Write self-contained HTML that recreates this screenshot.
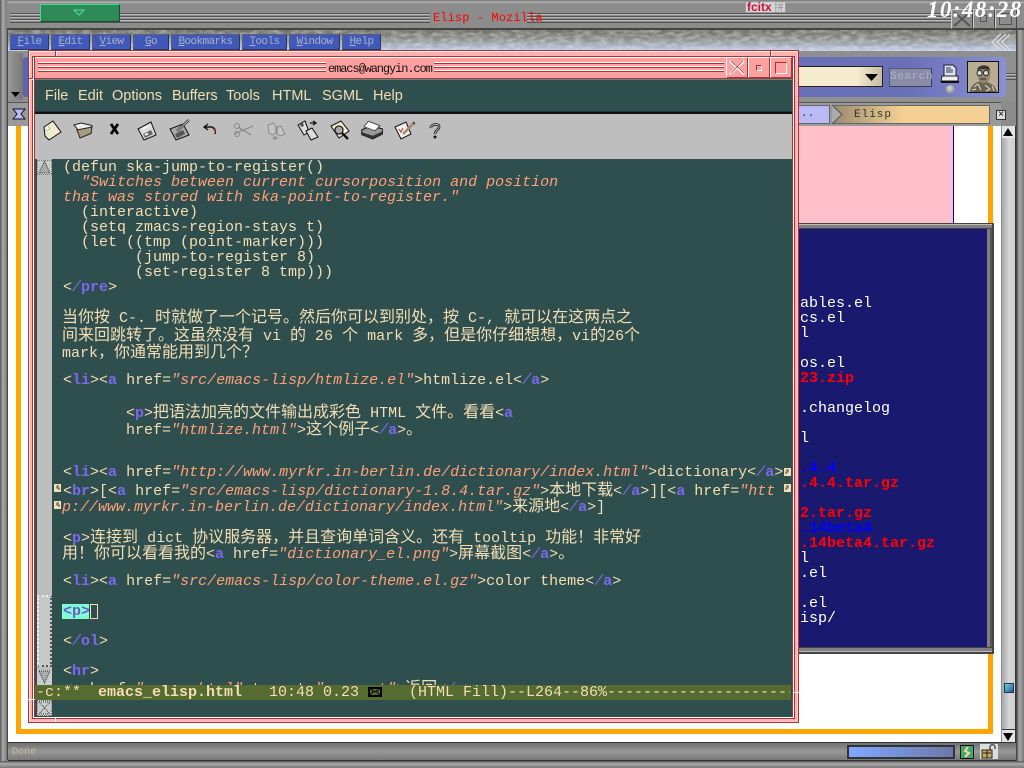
<!DOCTYPE html>
<html><head><meta charset="utf-8"><title>Elisp - Mozilla</title>
<style>
html,body{margin:0;padding:0;width:1024px;height:768px;overflow:hidden;background:#8a8a8a}
div,span,svg{box-sizing:border-box}
.a{position:absolute}
.l{position:absolute;white-space:pre;font:15px/15px "Liberation Mono","Noto Sans CJK SC",monospace;color:#f5deb3}
.c{font-family:"WenQuanYi Zen Hei","Noto Sans CJK SC",sans-serif;font-size:16px;line-height:15px}
i{color:#ffa07a;font-style:italic}
b{color:#7b68ee;font-weight:bold}
.s{color:#7b68ee;font-style:italic}
.g{background:repeating-linear-gradient(#555 0 1px,#bbb 1px 2px,#888 2px 3px)}
.m{position:absolute;top:34px;height:16px;background:#4058b8;border:1px solid;border-color:#5a6078 #2c3560 #2c3560 #5a6078;color:#aab0c8;font:11px/15px "Liberation Mono",monospace;letter-spacing:-.6px;text-align:center;white-space:pre}
.m u{text-decoration:underline}
.em{position:absolute;top:88px;font:14.5px/16px "Liberation Sans",sans-serif;color:#f5deb3;white-space:pre}
.w{position:absolute;white-space:pre;font:15px/15px "Liberation Mono",monospace;color:#fff}
.r{color:#f00;font-weight:bold}
.bl{color:#00f;font-weight:bold}
.wb{position:absolute;top:57px;width:22px;height:21px;background:#ffa0a0;border:1px solid;border-color:#fff #a33 #a33 #fff}
.tl{position:absolute;height:2px;background:linear-gradient(#fff 50%,#a33 50%)}
</style></head><body>

<!-- outer window frame -->
<div class="a" style="left:0;top:0;width:1024px;height:768px;background:#8c8c8c"></div>
<div class="a" style="left:0;top:0;width:1024px;height:3px;background:linear-gradient(#777,#bbb)"></div>
<div class="a" style="left:0;top:28px;width:1024px;height:2px;background:#444"></div>
<div class="a" style="left:7px;top:30px;width:1px;height:730px;background:#444"></div>
<div class="a" style="left:0;top:0;width:7px;height:768px;background:linear-gradient(90deg,#555,#aaa 40%,#777)"></div>
<div class="a" style="left:1016px;top:30px;width:8px;height:738px;background:linear-gradient(90deg,#333,#aaa 40%,#777)"></div>
<div class="a" style="left:0;top:761px;width:1024px;height:7px;background:linear-gradient(#555,#aaa 40%,#777)"></div>
<div class="a g" style="left:10px;top:13px;width:420px;height:10px"></div>
<div class="a g" style="left:527px;top:13px;width:425px;height:10px"></div>
<div class="a" style="left:40px;top:4px;width:80px;height:18px;background:#2e8b57;border:1px solid;border-color:#3fe08a #184a30 #184a30 #3fe08a"></div>
<svg class="a" style="left:73px;top:9px" width="12" height="7"><path d="M1 1H11L6 6Z" fill="#2e8b57" stroke="#52e09a"/></svg>
<div class="l" style="left:433px;top:11px;color:#f00;letter-spacing:.1px;font-size:12px">Elisp - Mozilla</div>
<div class="a" style="left:745px;top:1px;width:41px;height:12px;background:#d4d4d4;border:1px solid #999;font:bold 12px/10px 'Liberation Sans',sans-serif;color:#c8103c;padding-left:1px;white-space:pre">fcitx<span style="color:#999;font:10px/10px 'Noto Sans CJK SC',sans-serif"> 拼</span></div>
<div class="a" style="left:951px;top:9px;width:22px;height:20px;background:#8c8c8c;border:1px solid;border-color:#ccc #444 #444 #ccc"></div>
<svg class="a" style="left:953px;top:11px" width="18" height="16"><path d="M1 1L17 15M17 1L1 15" stroke="#555" stroke-width="2"/></svg>
<div class="a" style="left:973px;top:9px;width:22px;height:20px;background:#8c8c8c;border:1px solid;border-color:#ccc #444 #444 #ccc"></div>
<div class="a" style="left:980px;top:15px;width:7px;height:7px;border:1px solid #555"></div>
<div class="a" style="left:995px;top:9px;width:22px;height:20px;background:#8c8c8c;border:1px solid;border-color:#ccc #444 #444 #ccc"></div>
<div class="a" style="left:999px;top:13px;width:13px;height:12px;border:1px solid #555"></div>
<div class="a" style="left:927px;top:-3px;font:italic bold 23px/26px 'Liberation Serif',serif;color:#fff;letter-spacing:1.400px;white-space:pre">10:48:28</div>

<!-- textured menu band -->
<div class="a" style="left:8px;top:30px;width:1008px;height:21px;background:linear-gradient(#6e6e6a,#8b8b88 40%,#a8aec0 75%,#c4cce8);overflow:hidden">
<svg width="1008" height="21" style="display:block"><filter id="n"><feTurbulence type="fractalNoise" baseFrequency="0.12 0.3" numOctaves="3" seed="4"/><feColorMatrix values="0 0 0 0 1 0 0 0 0 1 0 0 0 0 1 1.6 0 0 0 -.55"/></filter><rect width="1008" height="21" filter="url(#n)" opacity=".5"/></svg></div>
<svg class="a" style="left:990px;top:33px" width="20" height="18"><path d="M11 1L2 9L11 17M16 1L7 9L16 17M20 1L12 9L20 17" fill="none" stroke="#ddd" stroke-width="1.4"/></svg>
<div class="m" style="left:10px;width:39px"><u>F</u>ile</div>
<div class="m" style="left:51px;width:39px"><u>E</u>dit</div>
<div class="m" style="left:92px;width:39px"><u>V</u>iew</div>
<div class="m" style="left:133px;width:36px"><u>G</u>o</div>
<div class="m" style="left:171px;width:69px"><u>B</u>ookmarks</div>
<div class="m" style="left:242px;width:45px"><u>T</u>ools</div>
<div class="m" style="left:289px;width:51px"><u>W</u>indow</div>
<div class="m" style="left:342px;width:39px"><u>H</u>elp</div>

<!-- navigation toolbar -->
<div class="a" style="left:8px;top:51px;width:1008px;height:51px;background:#8f8f8f"></div>
<div class="a" style="left:8px;top:53px;width:15px;height:47px;background:linear-gradient(90deg,#999,#777)"></div>
<svg class="a" style="left:11px;top:92px" width="9" height="6"><path d="M0 0H9L4.500 5Z"/></svg>
<div class="a" style="left:23px;top:57px;width:983px;height:40px;background:linear-gradient(90deg,#5c64b0,#6a70b8 90%,#8a90d4);border-radius:3px"></div>
<div class="a" style="left:798px;top:66px;width:85px;height:21px;background:linear-gradient(90deg,#f5ebcf,#f5ebcf 70%,#c8bca0);border:1px solid #222;border-left:0"></div>
<svg class="a" style="left:865px;top:74px" width="13" height="7"><path d="M0 0H13L6.500 7Z"/></svg>
<div class="a" style="left:889px;top:68px;width:43px;height:19px;background:#888ca8;border:1px solid;border-color:#555970 #3a3d55 #3a3d55 #555970;font:11px/17px 'Liberation Mono',monospace;color:#aeb2c2;text-align:center;letter-spacing:.6px">Search</div>
<svg class="a" style="left:940px;top:64px" width="20" height="20"><path d="M4 1H13L16 4V12H4Z" fill="#dde3f0" stroke="#222"/><path d="M6 4H11M6 6H13M6 8H13" stroke="#335"/><path d="M2 12H18V17H1Z" fill="#eee" stroke="#222"/><path d="M1 18H19" stroke="#111" stroke-width="2"/></svg>
<div class="a" style="left:946px;top:85px;width:9px;height:9px;border-radius:50%;background:radial-gradient(circle at 40% 35%,#ddd,#666)"></div>
<div class="a" style="left:967px;top:61px;width:32px;height:32px;background:#b5ab90;border:1px solid #111;overflow:hidden">
<svg width="30" height="30"><rect width="30" height="30" fill="#b8ae94"/><path d="M2 30C3 21 10 20 14 19C20 20 27 22 29 30Z" fill="#6a6450"/><path d="M9 10C9 4 14 3 18 4C23 5 23 11 22 15C21 20 17 22 14 21C11 20 9 15 9 10Z" fill="#8d8570"/><path d="M9 8C10 3 17 2 21 5L22 9C18 6 13 7 9 8Z" fill="#3a352a"/><circle cx="11.500" cy="11" r="2.500" fill="#ddd" stroke="#222"/><circle cx="18" cy="11" r="2.500" fill="#ddd" stroke="#222"/><path d="M6 25L10 22L13 28M17 23L22 27L18 29M24 24L26 29M4 28L8 27" stroke="#e4e0d0" fill="none"/><path d="M12 17H18" stroke="#332"/></svg></div>
<div class="a g" style="left:1006px;top:73px;width:10px;height:7px"></div>

<!-- tab row -->
<div class="a" style="left:8px;top:102px;width:993px;height:24px;background:#9a9a9a;border-top:1px solid #555"></div>
<svg class="a" style="left:12px;top:108px" width="14" height="12"><path d="M1 1H13L9 6L13 11H1L5 6Z" fill="#b9b9ff" stroke="#111" stroke-width="1"/></svg>
<div class="a" style="left:798px;top:105px;width:32px;height:19px;background:#b9b9f5;border:1px solid #666;font:11px/17px 'Liberation Mono',monospace;color:#333;padding-left:2px">..</div>
<div class="a" style="left:832px;top:105px;width:158px;height:19px;background:linear-gradient(90deg,#9a8a70,#f5d094 45%,#f5d094);border:1px solid #666;font:11px/18px 'Liberation Mono',monospace;color:#332;padding-left:21px;letter-spacing:1px">Elisp</div>
<svg class="a" style="left:832px;top:105px" width="11" height="19"><path d="M0 0L10 9.500L0 19" fill="#aaa" stroke="#555"/></svg>
<div class="a" style="left:996px;top:110px;width:10px;height:10px;background:#ddd;border:1px solid #333;font:10px/8px 'Liberation Sans',sans-serif;text-align:center">×</div>

<!-- browser content -->
<div class="a" style="left:8px;top:126px;width:993px;height:616px;background:#fff"></div>
<div class="a" style="left:16px;top:126px;width:5px;height:608px;background:#ffa500"></div>
<div class="a" style="left:988px;top:126px;width:5px;height:608px;background:#ffa500"></div>
<div class="a" style="left:16px;top:729px;width:977px;height:5px;background:#ffa500"></div>
<div class="a" style="left:798px;top:126px;width:155px;height:99px;background:#ffc0cb"></div>
<div class="a" style="left:953px;top:126px;width:1px;height:99px;background:#00c"></div>

<!-- dark blue panel -->
<div class="a" style="left:790px;top:223px;width:204px;height:431px;background:#191970;border:1px solid #444;border-width:1px 2px 2px 1px"></div>
<div class="a" style="left:987px;top:225px;width:5px;height:427px;background:#808080;border-right:2px solid #555"></div>
<div class="a" style="left:790px;top:224px;width:202px;height:5px;background:#808080;border-top:1px solid #bbb;border-bottom:1px solid #444"></div>
<div class="a" style="left:790px;top:647px;width:202px;height:5px;background:#808080;border-top:1px solid #444;border-bottom:1px solid #bbb"></div>
<div class="w" style="left:800px;top:296px">ables.el</div>
<div class="w" style="left:800px;top:311px">cs.el</div>
<div class="w" style="left:800px;top:326px">l</div>
<div class="w" style="left:800px;top:356px">os.el</div>
<div class="w r" style="left:800px;top:371px">23.zip</div>
<div class="w" style="left:800px;top:401px">.changelog</div>
<div class="w" style="left:800px;top:431px">l</div>
<div class="w bl" style="left:800px;top:461px">.4.4</div>
<div class="w r" style="left:800px;top:476px">.4.4.tar.gz</div>
<div class="w r" style="left:800px;top:506px">2.tar.gz</div>
<div class="w bl" style="left:800px;top:521px">.14beta4</div>
<div class="w r" style="left:800px;top:536px">.14beta4.tar.gz</div>
<div class="w" style="left:800px;top:551px">l</div>
<div class="w" style="left:800px;top:566px">.el</div>
<div class="w" style="left:800px;top:596px">.el</div>
<div class="w" style="left:800px;top:611px">isp/</div>

<!-- browser scrollbar -->
<div class="a" style="left:1002px;top:126px;width:14px;height:616px;background:linear-gradient(90deg,#a8a8a8,#d6d6d6 55%,#cfcfcf);border-right:1px solid #333"></div>
<div class="a" style="left:1002px;top:126px;width:13px;height:12px;background:#e4e4e4"></div>
<svg class="a" style="left:1003px;top:128px" width="10" height="8"><path d="M5 0L10 8H0Z"/></svg>
<div class="a" style="left:1002px;top:729px;width:13px;height:13px;background:#e4e4e4;border-top:1px solid #333"></div>
<svg class="a" style="left:1003px;top:733px" width="10" height="8"><path d="M0 0H10L5 8Z"/></svg>
<div class="a" style="left:1004px;top:683px;width:10px;height:10px;background:linear-gradient(135deg,#6fd0e8,#1c5d96);border:1px solid #234"></div>

<!-- status bar -->
<div class="a" style="left:8px;top:742px;width:1008px;height:19px;background:linear-gradient(#707070,#989898 50%,#787878);border-top:1px solid #333;border-bottom:1px solid #333"></div>
<div class="a" style="left:12px;top:748px;font:10px/10px 'Liberation Mono',monospace;color:#c4bca4">Done</div>
<div class="a" style="left:847px;top:745px;width:108px;height:14px;background:linear-gradient(90deg,#80a8ff,#6c78a8);border:2px solid #333"></div>
<svg class="a" style="left:960px;top:745px" width="14" height="14"><rect x=".5" y=".5" width="13" height="13" fill="#3fa870" stroke="#111"/><path d="M8 2L5 6L9 8L5 12" fill="none" stroke="#f5d8a0" stroke-width="2"/></svg>
<svg class="a" style="left:980px;top:744px" width="18" height="15"><rect width="18" height="15" fill="#ddd"/><path d="M10 6V3C10 0 15 0 15 3V5" fill="none" stroke="#555" stroke-width="1.500"/><rect x="2" y="6" width="10" height="8" fill="#c8aa58" stroke="#222"/><path d="M3 9H11M7 6V14" stroke="#222"/></svg>

<!-- EMACS WINDOW -->
<div class="a" style="left:28px;top:50px;width:771px;height:673px;background:#a33"></div>
<div class="a" style="left:29px;top:51px;width:769px;height:671px;background:#ffb0b0;border:1px solid #fff0f0;border-right-color:#ffc8c8;border-bottom-color:#ffc8c8"></div>
<div class="a" style="left:32px;top:56px;width:763px;height:663px;background:#a33"></div>
<div class="a" style="left:33px;top:57px;width:761px;height:661px;background:#fff"></div>
<div class="a" style="left:34px;top:57px;width:759px;height:660px;background:#a33"></div>
<div class="a" style="left:35px;top:57px;width:691px;height:21px;background:#ffa0a0;border-top:1px solid #fff"></div>
<div class="tl" style="left:38px;top:62px;width:288px"></div>
<div class="tl" style="left:38px;top:66px;width:288px"></div>
<div class="tl" style="left:38px;top:70px;width:288px"></div>
<div class="tl" style="left:434px;top:62px;width:290px"></div>
<div class="tl" style="left:434px;top:66px;width:290px"></div>
<div class="tl" style="left:434px;top:70px;width:290px"></div>
<div class="l" style="left:328px;top:62px;line-height:15px;color:#111;font-size:12px;letter-spacing:-1.100px">emacs@wangyin.com</div>
<div class="wb" style="left:726px"></div>
<svg class="a" style="left:729px;top:60px" width="16" height="15"><path d="M1 1L15 14M15 1L1 14" stroke="#fff" stroke-width="2.500"/><path d="M2 1L15 13M14 1L2 13" stroke="#a33" stroke-width=".8"/></svg>
<div class="wb" style="left:748px"></div>
<div class="a" style="left:756px;top:65px;width:6px;height:6px;background:#ffa0a0;border:1px solid;border-color:#a33 #fff #fff #a33"></div>
<div class="wb" style="left:770px"></div>
<div class="a" style="left:775px;top:62px;width:12px;height:12px;background:#ffa0a0;border:1px solid;border-color:#a33 #fff #fff #a33"></div>
<!-- top notches -->
<div class="a" style="left:55px;top:51px;width:1px;height:5px;background:#a33"></div>
<div class="a" style="left:56px;top:51px;width:1px;height:5px;background:#fff"></div>
<div class="a" style="left:770px;top:51px;width:1px;height:5px;background:#a33"></div>
<div class="a" style="left:771px;top:51px;width:1px;height:5px;background:#fff"></div>
<div class="a" style="left:29px;top:78px;width:4px;height:1px;background:#a33"></div>
<div class="a" style="left:29px;top:79px;width:4px;height:1px;background:#fff"></div>

<!-- emacs frame -->
<div class="a" style="left:35px;top:79px;width:757px;height:638px;background:#2f4f4f;overflow:hidden;border-top:1px solid #5a8a80"></div>
<div class="em" style="left:45px">File</div>
<div class="em" style="left:78px">Edit</div>
<div class="em" style="left:112px">Options</div>
<div class="em" style="left:172px">Buffers</div>
<div class="em" style="left:226px">Tools</div>
<div class="em" style="left:272px">HTML</div>
<div class="em" style="left:322px">SGML</div>
<div class="em" style="left:373px">Help</div>
<div class="a" style="left:35px;top:111px;width:757px;height:3px;background:#111;border-top:1px solid #234"></div>
<div class="a" style="left:35px;top:114px;width:757px;height:45px;background:#bebebe"></div>

<!-- emacs toolbar icons -->
<svg class="a" style="left:43px;top:120px" width="20" height="21"><path d="M1 7L10 1L18 12L6 20L2 16Z" fill="#eeeccc" stroke="#111"/><path d="M4 5L7 9L2 11" fill="#fff" stroke="#aaa" stroke-width=".7"/></svg>
<svg class="a" style="left:73px;top:122px" width="21" height="18"><path d="M1 3L8 1L19 3.500L18 7L6 9Z" fill="#eee" stroke="#222"/><path d="M4 8L19 5L18 11.500L7 16Z" fill="#a89c80" stroke="#222"/></svg>
<svg class="a" style="left:108px;top:122px" width="12" height="14"><path d="M3 2L10 12M10 2L3 12" stroke="#000" stroke-width="2.800"/></svg>
<svg class="a" style="left:136px;top:120px" width="22" height="21"><path d="M2 9L15 2L20 15L8 20Z" fill="#ddd" stroke="#111"/><path d="M7 14L15 10L17 14L9 18Z" fill="#666"/><path d="M9 15L12 13.500" stroke="#fff" stroke-width="2"/><path d="M6 8L12 5L13 7L7 10Z" fill="#f4f4f4"/></svg>
<svg class="a" style="left:168px;top:119px" width="22" height="22"><path d="M2 10L15 5L21 16L8 21Z" fill="#aaa" stroke="#111"/><path d="M7 15L15 11L17 15L9 19Z" fill="#555"/><path d="M9 12L21 1" stroke="#333" stroke-width="2.500"/><path d="M9 12L21 1" stroke="#ddd" stroke-width=".8"/></svg>
<svg class="a" style="left:203px;top:123px" width="15" height="13"><path d="M5 1L1 4L5 7" fill="none" stroke="#111" stroke-width="1.300"/><path d="M2 4H8C11 4 13 7 12 11" fill="none" stroke="#111" stroke-width="1.500"/><path d="M9 5C11 6 12 8 12 10" fill="none" stroke="#c44" stroke-width="1"/></svg>
<svg class="a" style="left:233px;top:122px" width="21" height="16"><path d="M1 12L20 4M5 5L18 13" stroke="#888" stroke-width="1.200"/><circle cx="4" cy="12" r="2.500" fill="none" stroke="#888"/><circle cx="4" cy="4" r="2.500" fill="none" stroke="#888"/></svg>
<svg class="a" style="left:266px;top:122px" width="20" height="19"><path d="M2 3L7 1L10 5L10 11L6 13L3 11ZM11 5L15 4L19 12L14 14L11 12Z" fill="#c4c4c4" stroke="#888"/><path d="M6 16H10M8 14L11 16L8 18" stroke="#888" fill="none"/></svg>
<svg class="a" style="left:297px;top:120px" width="22" height="21"><path d="M1 5L8 1L12 12L7 15Z" fill="#ddd" stroke="#111"/><path d="M9 11L15 8L21 17L14 20Z" fill="#ddd" stroke="#111"/><path d="M3 4L6 3L7 6L4 7Z" fill="#555"/><path d="M13 3H18M16 1L19 3L16 5" stroke="#111" fill="none" stroke-width="1.300"/></svg>
<svg class="a" style="left:330px;top:120px" width="21" height="21"><path d="M1 6L11 1L19 11L9 18Z" fill="#eeeccc" stroke="#111"/><circle cx="9" cy="10" r="4" fill="#aaa" stroke="#222" stroke-width="1.300"/><path d="M12 13L18 19" stroke="#111" stroke-width="2.300"/></svg>
<svg class="a" style="left:361px;top:119px" width="22" height="21"><path d="M.7 11L10 6.700L21.700 10V15L11.700 20L.7 15.700Z" fill="#999" stroke="#111"/><path d="M.7 13.300L11.700 16.700L21.700 12.300V15L11.700 20L.7 15.700Z" fill="#333"/><path d="M7.300 2.300L19 6.700L14 11.700L3 7.700Z" fill="#fff" stroke="#333" stroke-width=".8"/></svg>
<svg class="a" style="left:394px;top:120px" width="22" height="20"><path d="M1 7L12 2L17 14L7 19Z" fill="#eee" stroke="#111"/><path d="M5 9L7 12L9 8" stroke="#a54" fill="none" stroke-width="1.200"/><path d="M9 14L20 3" stroke="#a86" stroke-width="2.500"/><path d="M19 2L21 4" stroke="#333" stroke-width="1.500"/></svg>
<svg class="a" style="left:428px;top:122px" width="14" height="17"><path d="M3 6C2 2 12 1 11 5C11 8 7 8 7 12" fill="none" stroke="#111" stroke-width="2.500"/><path d="M3 6C2 2 12 1 11 5C11 8 7 8 7 12" fill="none" stroke="#ddd" stroke-width=".8"/><circle cx="7" cy="15" r="1.500" fill="#111"/></svg>

<!-- emacs scrollbar -->
<div class="a" style="left:37px;top:159px;width:15px;height:526px;background:#bebebe"></div>
<div class="a" style="left:37px;top:595px;width:15px;height:72px;background:#c8c8c8;border:2px dotted #555;border-top-color:#eee;border-left-color:#eee"></div>
<svg class="a" style="left:37px;top:160px" width="15" height="15"><rect width="15" height="15" fill="#ccc"/><rect width="15" height="15" fill="none" stroke="#222" stroke-dasharray="1 1"/><path d="M7.500 1L13 13H2Z" fill="#aaa" stroke="#333" stroke-dasharray="1 1"/></svg>
<svg class="a" style="left:37px;top:670px" width="15" height="15"><rect width="15" height="15" fill="#ccc"/><path d="M2 1H13L7.500 13Z" fill="#aaa" stroke="#333" stroke-dasharray="1 1"/></svg>
<svg class="a" style="left:37px;top:700px" width="15" height="16"><rect width="15" height="16" fill="#ccc"/><rect width="15" height="16" fill="none" stroke="#222" stroke-dasharray="1 1"/><path d="M2 2L13 14M13 2L2 14M2 2H13M2 14H13" stroke="#333" stroke-dasharray="1 1"/></svg>

<!-- buffer text -->
<div class="l" style="left:63px;top:160px">(defun ska-jump-to-register()</div>
<div class="l" style="left:63px;top:175px">  <i>"Switches between current cursorposition and position</i></div>
<div class="l" style="left:63px;top:190px"><i>that was stored with ska-point-to-register."</i></div>
<div class="l" style="left:63px;top:205px">  (interactive)</div>
<div class="l" style="left:63px;top:220px">  (setq zmacs-region-stays t)</div>
<div class="l" style="left:63px;top:235px">  (let ((tmp (point-marker)))</div>
<div class="l" style="left:63px;top:250px">        (jump-to-register 8)</div>
<div class="l" style="left:63px;top:265px">        (set-register 8 tmp)))</div>
<div class="l" style="left:63px;top:280px">&lt;<span class="s">/</span><b>pre</b>&gt;</div>

<div class="l" style="left:62px;top:308px"><span class="c">当你按</span> C-. <span class="c">时就做了一个记号。然后你可以到别处，按</span> C-, <span class="c">就可以在这两点之</span></div>
<div class="l" style="left:62px;top:326px"><span class="c">间来回跳转了。这虽然没有</span> vi <span class="c">的</span> 26 <span class="c">个</span> mark <span class="c">多，但是你仔细想想，</span>vi<span class="c">的</span>26<span class="c">个</span></div>
<div class="l" style="left:62px;top:343px">mark<span class="c">，你通常能用到几个？</span></div>

<div class="l" style="left:63px;top:373px">&lt;<b>li</b>&gt;&lt;<b>a</b> href=<i>"src/emacs-lisp/htmlize.el"</i>&gt;htmlize.el&lt;<span class="s">/</span><b>a</b>&gt;</div>
<div class="l" style="left:126px;top:403px">&lt;<b>p</b>&gt;<span class="c">把语法加亮的文件输出成彩色</span> HTML <span class="c">文件。看看</span>&lt;<b>a</b></div>
<div class="l" style="left:126px;top:420px">href=<i>"htmlize.html"</i>&gt;<span class="c">这个例子</span>&lt;<span class="s">/</span><b>a</b>&gt;<span class="c">。</span></div>

<div class="l" style="left:63px;top:465px">&lt;<b>li</b>&gt;&lt;<b>a</b> href=<i>"http://www.myrkr.in-berlin.de/dictionary/index.html"</i>&gt;dictionary&lt;<span class="s">/</span><b>a</b>&gt;</div>
<div class="l" style="left:63px;top:481px">&lt;<b>br</b>&gt;[&lt;<b>a</b> href=<i>"src/emacs-lisp/dictionary-1.8.4.tar.gz"</i>&gt;<span class="c">本地下载</span>&lt;<span class="s">/</span><b>a</b>&gt;][&lt;<b>a</b> href=<i>"htt</i></div>
<div class="l" style="left:62px;top:497px"><i>p://www.myrkr.in-berlin.de/dictionary/index.html"</i>&gt;<span class="c">来源地</span>&lt;<span class="s">/</span><b>a</b>&gt;]</div>

<div class="l" style="left:63px;top:528px">&lt;<b>p</b>&gt;<span class="c">连接到</span> dict <span class="c">协议服务器，并且查询单词含义。还有</span> tooltip <span class="c">功能！非常好</span></div>
<div class="l" style="left:62px;top:544px"><span class="c">用！你可以看看我的</span>&lt;<b>a</b> href=<i>"dictionary_el.png"</i>&gt;<span class="c">屏幕截图</span>&lt;<span class="s">/</span><b>a</b>&gt;<span class="c">。</span></div>

<div class="l" style="left:63px;top:574px">&lt;<b>li</b>&gt;&lt;<b>a</b> href=<i>"src/emacs-lisp/color-theme.el.gz"</i>&gt;color theme&lt;<span class="s">/</span><b>a</b>&gt;</div>

<div class="a" style="left:62px;top:604px;width:27px;height:15px;background:#7fffd4"></div>
<div class="l" style="left:63px;top:604px"><b style="color:#6a5acd">&lt;p&gt;</b></div>
<div class="a" style="left:90px;top:604px;width:8px;height:15px;border:1px solid #f5deb3"></div>

<div class="l" style="left:63px;top:634px">&lt;<span class="s">/</span><b>ol</b>&gt;</div>
<div class="l" style="left:63px;top:664px">&lt;<b>hr</b>&gt;</div>
<div class="a" style="left:36px;top:676px;width:750px;height:9px;overflow:hidden"><div class="l" style="left:27px;top:3px">&lt;<b>a</b> href=<i>"emacs.html"</i> target=<i>"_parent"</i>&gt;<span class="c">返回</span>&lt;<span class="s">/</span><b>a</b>&gt;</div></div>

<!-- continuation glyphs -->
<svg class="a" style="left:784px;top:468px" width="7" height="8"><path d="M0 0H7V8H0Z" fill="#f5deb3"/><path d="M2 2H4V4H2V6" stroke="#2f4f4f" fill="none"/></svg>
<svg class="a" style="left:784px;top:484px" width="7" height="8"><path d="M0 0H7V8H0Z" fill="#f5deb3"/><path d="M2 2H4V4H2V6" stroke="#2f4f4f" fill="none"/></svg>
<svg class="a" style="left:54px;top:484px" width="7" height="8"><path d="M0 0H7V8H0Z" fill="#f5deb3"/><path d="M5 2H3V4H5V6" stroke="#2f4f4f" fill="none"/></svg>
<svg class="a" style="left:54px;top:501px" width="7" height="8"><path d="M0 0H7V8H0Z" fill="#f5deb3"/><path d="M5 2H3V4H5V6" stroke="#2f4f4f" fill="none"/></svg>

<!-- mode line -->
<div class="a" style="left:35px;top:685px;width:756px;height:15px;background:#556b2f"></div>
<div class="l" style="left:36px;top:685px">-c:**</div>
<div class="l" style="left:98px;top:685px;font-weight:bold">emacs_elisp.html</div>
<div class="l" style="left:269px;top:685px">10:48 0.23</div>
<svg class="a" style="left:368px;top:687px" width="14" height="10"><rect x="1" y="1" width="12" height="8" fill="#556b2f" stroke="#000" stroke-width="2"/><path d="M1 1L7 5L13 1M1 9L5.500 4.500M13 9L8.500 4.500" stroke="#000" fill="none"/></svg>
<div class="l" style="left:409px;top:685px;width:381px;overflow:hidden">(HTML Fill)--L264--86%------------------------------</div>

<!-- frame notches -->
<div class="a" style="left:28px;top:699px;width:7px;height:1px;background:#fff"></div>
<div class="a" style="left:793px;top:692px;width:6px;height:1px;background:#fff"></div>
<div class="a" style="left:55px;top:717px;width:1px;height:5px;background:#fff"></div>
</body></html>
